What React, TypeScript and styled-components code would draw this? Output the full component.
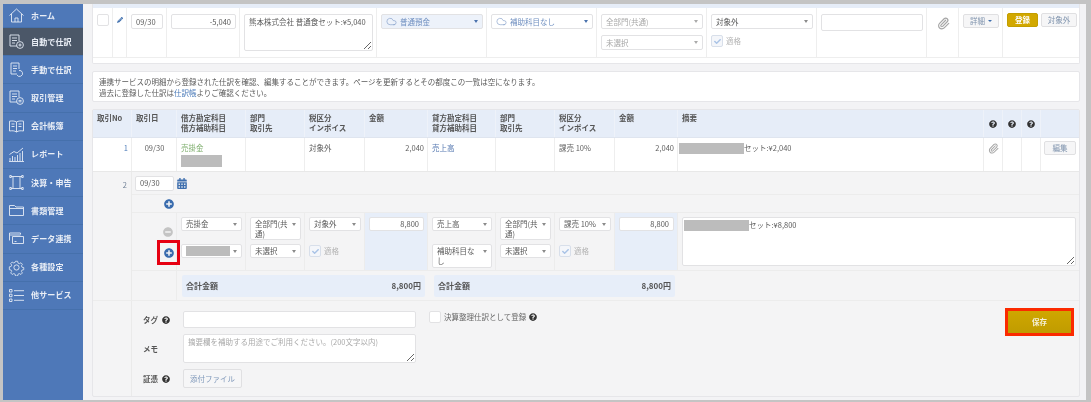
import React from "react";
import styled, { createGlobalStyle, css } from "styled-components";
import { FaCalendarAlt, FaCheck, FaMinusCircle, FaPencilAlt, FaPlusCircle, FaQuestionCircle } from "react-icons/fa";
import { Cloud, Paperclip } from "lucide-react";

const Global = createGlobalStyle`
  html, body { margin: 0; padding: 0; background: #c4c4c4; }
  * { box-sizing: border-box; }
  body { font-family: "Noto Sans CJK JP", "Noto Sans", sans-serif; font-size: 7.5px; line-height: 10px; color: #5a5a5a; }
`;

const Frame = styled.div`
  width: 1091px; height: 402px; padding: 4px 5px 2px 3px; display: flex; overflow: hidden; filter: blur(0.45px);
`;
const Sidebar = styled.nav`
  width: 80px; flex: none; background: #4e78b8; display: flex; flex-direction: column;
`;
const NavItem = styled.div<{ $active?: boolean; $first?: boolean }>`
  height: ${p => (p.$first ? "24px" : "28.2px")}; flex: none; display: flex; align-items: center; gap: 6px; padding-left: 5px;
  color: #e9eef6; font-size: 8px; font-weight: 700; letter-spacing: 0.15px;
  border-bottom: 1px solid #4570ac;
  background: ${p => (p.$active ? "#4b5768" : "transparent")};
  svg { width: 17px; height: 17px; flex: none; fill: none; stroke: #e4ebf5; stroke-width: 0.9; }
`;
const Main = styled.main`
  flex: 1; background: #f3f3f5; padding: 0 6px 3px 9px; display: flex; flex-direction: column; gap: 7px; min-width: 0;
`;
const Card = styled.section`
  background: #fff; border: 1px solid #e6e6e9; border-top: 0; border-radius: 0 0 2px 2px; width: 988px;
`;
const Strip = styled.div`height: 4px; background: #e6edf8;`;
const TopRow = styled.div`
  height: 50px; display: grid; border-bottom: 1px solid #eee; margin-bottom: 5px;
  grid-template-columns: 20px 14px 40px 73px 137px 110px 110px 110px 110px 110px 32px 44px 78px;
`;
const TopCell = styled.div<{ $center?: boolean }>`
  padding: 6px 3px 0 4px; border-right: 1px solid #eee; display: flex; flex-direction: column; gap: 6px;
  ${p => p.$center && css`align-items: center;`}
  &:last-child { border-right: 0; }
`;
const fieldBase = css`
  background: #fff; border: 1px solid #e2e2e4; border-radius: 2px; font: inherit; color: #5a5a5a;
`;
const Field = styled.div<{ $h?: number; $right?: boolean; $w?: number }>`
  ${fieldBase}
  height: ${p => p.$h ?? 15}px; padding: 1px 4px; display: flex; align-items: center; flex: none;
  justify-content: ${p => (p.$right ? "flex-end" : "flex-start")};
  ${p => p.$w && css`width: ${p.$w}px;`}
`;
const TextBox = styled.div<{ $h: number }>`
  ${fieldBase}
  height: ${p => p.$h}px; padding: 2px 4px; resize: vertical; overflow: hidden; flex: none;
`;
const Select = styled.div<{ $h?: number; $tone?: "blue" | "plain" | "mute" }>`
  ${fieldBase}
  min-height: ${p => p.$h ?? 14}px; height: ${p => p.$h ?? 14}px; padding: 1px 11px 1px 4px; position: relative; display: flex; align-items: ${p => ((p.$h ?? 14) > 15 ? "flex-start" : "center")};
  flex: none; gap: 3px;
  ${p => p.$tone === "blue" && css`background: #edf2fa; color: #6f8fc0; height: 15px;`}
  ${p => p.$tone === "plain" && css`color: #6f8fc0; height: 15px;`}
  ${p => p.$tone === "mute" && css`color: #a8a8a8; height: 15px;`}
  &::after {
    content: ""; position: absolute; right: 4px; top: 5px; border: 2.5px solid transparent; border-bottom-width: 0; border-top: 3px solid ${p => (p.$tone === "mute" ? "#aaa" : p.$tone ? "#4a72ad" : "#8a8a8a")};
  }
`;
const CloudIcon = styled(Cloud)`width: 11px; height: 11px; color: #6f8fc0; stroke-width: 1.2; flex: none;`;
const Check = styled.span<{ $on?: boolean }>`
  width: 12px; height: 12px; flex: none; display: inline-flex; align-items: center; justify-content: center;
  background: ${p => (p.$on ? "#f4f6fa" : "#fff")}; border: 1px solid ${p => (p.$on ? "#d8dfea" : "#e2e2e4")}; border-radius: 2px; color: #a9c3e6;
  svg { width: 7px; height: 7px; }
`;
const CheckLine = styled.label`
  display: flex; align-items: center; gap: 3px; color: #b4b4b4;
`;
const Pencil = styled(FaPencilAlt)`width: 6px; height: 6px; color: #3f6fae; margin-top: 3px;`;
const Clip = styled(Paperclip)<{ $size?: number }>`
  width: ${p => p.$size ?? 13}px; height: ${p => p.$size ?? 13}px; color: #a6a6a6; stroke-width: 2.2;
`;
const Btn = styled.button<{ $gold?: boolean; $w?: number }>`
  font: inherit; height: 14px; width: ${p => p.$w ?? 36}px; padding: 0; border-radius: 2px; display: inline-flex; align-items: center; justify-content: center; gap: 3px; flex: none;
  border: 1px solid ${p => (p.$gold ? "#c39e00" : "#e0e0e2")};
  background: ${p => (p.$gold ? "#d2a800" : "#f6f6f7")};
  color: ${p => (p.$gold ? "#fff" : "#7f93ad")};
  font-weight: ${p => (p.$gold ? 700 : 400)};
`;
const Caret = styled.span`border: 2px solid transparent; border-bottom-width: 0; border-top: 2.5px solid #3f6fae;`;
const BtnRow = styled.div`display: flex; gap: 3px; margin-top: -1px;`;
const Notice = styled.section`
  width: 988px; height: 31px; background: #fff; border: 1px solid #e6e6e9; border-radius: 2px; padding: 4px 6px; flex: none; line-height: 11px;
`;
const Link = styled.span`color: #4a7ab8;`;
const Table = styled.section`
  width: 988px; flex: 1; border: 1px solid #e6e6e9; border-radius: 2px; background: #f4f4f5; display: flex; flex-direction: column; overflow: hidden; margin-left: 0;
`;
const columns = "39px 45px 69px 59px 60px 63px 68px 59px 60px 63px 306px 19px 19px 19px 38px";
const HeadRow = styled.div`
  height: 28px; display: grid; grid-template-columns: ${columns}; background: #e6edf8; border-bottom: 1px solid #dfe5ef; flex: none;
`;
const HeadCell = styled.div<{ $center?: boolean }>`
  padding: 3px 3px 0 4px; font-weight: 700; color: #555; border-right: 1px solid #eef2f9; white-space: pre-line;
  ${p => p.$center && css`padding: 10px 0 0; display: flex; justify-content: center;`}
  &:last-child { border-right: 0; }
`;
const Help = styled(FaQuestionCircle)`width: 8px; height: 8px; color: #333; flex: none;`;
const BodyRow = styled.div`
  height: 34px; display: grid; grid-template-columns: ${columns}; background: #fff; border-bottom: 1px solid #e8e8e8; flex: none;
`;
const BodyCell = styled.div<{ $right?: boolean; $center?: boolean; $tone?: string }>`
  padding: 5px 3px 0 4px; border-right: 1px solid #eee; color: ${p => p.$tone ?? "#5f5f5f"};
  text-align: ${p => (p.$right ? "right" : p.$center ? "center" : "left")};
  &:last-child { border-right: 0; }
`;
const Redact = styled.span<{ $w: number; $h?: number }>`
  display: inline-block; width: ${p => p.$w}px; height: ${p => p.$h ?? 11}px; background: #bcbcbc; vertical-align: top;
`;
const RedactBlock = styled(Redact)`display: block; margin-top: 2px;`;
const Clipped = styled.div`display: flex; justify-content: center;`;
const SmallBtn = styled(Btn)`margin: -3px 0 0 0; height: 14px; width: 32px;`;
const Entry = styled.div`flex: 1; display: flex;`;
const EntryNo = styled.div`
  width: 39px; flex: none; border-right: 1px solid #eaeaea; text-align: right; padding: 8px 4px 0 0; color: #6f7f95;
`;
const EntryBody = styled.div`flex: 1; display: flex; flex-direction: column; min-width: 0;`;
const DateRow = styled.div`
  height: 23px; display: flex; align-items: center; gap: 3px; padding: 0 0 0 3px; border-bottom: 1px solid #ececec; flex: none;
`;
const Calendar = styled(FaCalendarAlt)`width: 10px; height: 11px; color: #3f6fae;`;
const PlusRow = styled.div`
  height: 17px; width: 45px; padding-right: 3px; display: flex; align-items: center; justify-content: flex-end; flex: none;
`;
const PlusIcon = styled(FaPlusCircle)`width: 10px; height: 10px; color: #3a6cae; flex: none;`;
const MinusIcon = styled(FaMinusCircle)`width: 10px; height: 10px; color: #c4c4c4; flex: none;`;
const entryColumns = "45px 69px 59px 60px 63px 68px 59px 60px 63px 1fr";
const Lines = styled.div`
  height: 59px; display: grid; grid-template-columns: ${entryColumns}; border-top: 1px solid #ececec; border-bottom: 1px solid #ececec; flex: none;
`;
const LineCell = styled.div<{ $blue?: boolean }>`
  padding: 4px 3px 0 4px; border-right: 1px solid #ececec; display: flex; flex-direction: column; gap: 0;
  ${p => p.$blue && css`background: #e7eef9;`}
  &:last-child { border-right: 0; }
`;
const LineTools = styled(LineCell)`align-items: flex-end; padding: 14px 3px 0 0;`;
const MinusSlot = styled.div`display: flex; margin-bottom: 3px;`;
const Marker = styled.div`
  width: 23px; height: 25px; margin-right: -7px; border: 3px solid #e60012; display: flex; align-items: center; justify-content: center;
`;
const Gap = styled.div<{ $h: number }>`height: ${p => p.$h}px; flex: none;`;
const TotalRow = styled.div`
  height: 29px; display: grid; grid-template-columns: 45px 252px 250px 1fr; flex: none;
`;
const TotalCell = styled.div`
  margin: 4px 4px 3px 5px; background: #e7eef9; display: flex; justify-content: space-between; align-items: center; padding: 0 4px; font-weight: 700; font-size: 8px; color: #555; border-radius: 2px;
`;
const Empty = styled.div`border-right: 1px solid #ececec;`;
const TotalEmpty = styled.div``;
const Form = styled.div`
  flex: 1; margin-left: -39px; padding: 10px 5px 0 50px; border-top: 1px solid #ececec; display: flex; min-height: 0;
`;
const FormGrid = styled.div`
  display: grid; grid-template-columns: 40px 233px; row-gap: 6px; align-items: center; align-content: start; flex: none;
`;
const FormLabel = styled.div`display: flex; align-items: center; gap: 4px; font-weight: 700; color: #555;`;
const FormCheck = styled.div`display: flex; align-items: center; gap: 3px; margin-left: 13px; height: 12px; color: #666;`;
const Spacer = styled.div`flex: 1;`;
const Placeholder = styled.span`color: #aaa;`;
const AttachBtn = styled(Btn)`height: 19px; width: 59px; color: #7f98ba;`;
const SaveMark = styled.div`
  width: 69px; height: 28px; border: 3px solid #fb2a00; margin-top: -3px; flex: none;
`;
const Save = styled.button`
  width: 100%; height: 100%; border: 0; padding: 0; background: linear-gradient(#cfa700, #c09c00); color: #f5f0d8; font: inherit; font-weight: 700; display: flex; align-items: center; justify-content: center;
`;

const I = {
  home: <svg viewBox="0 0 17 17"><path d="M1.5 8.5 8.5 2l7 6.5M3.5 7v8h10V7M7 15v-4h3v4" /></svg>,
  auto: <svg viewBox="0 0 17 17"><path d="M9 13H2V2h9v6M4 5h5M4 7.5h5M4 10h3" /><circle cx="12" cy="12" r="3.4" /><path d="M12 10.4v3.2M10.4 12h3.2" /></svg>,
  manual: <svg viewBox="0 0 17 17"><path d="M9 13H3V2h8v6M5 5h4M5 7.5h4M5 10h3" /><path d="M11 9.5a3 3 0 1 1-2 4.5" /></svg>,
  deal: <svg viewBox="0 0 17 17"><path d="M9 13H2V2h9v6M4 5h5M4 7.5h5M4 10h3" /><circle cx="12" cy="12" r="3.4" /><path d="M10.5 11.4h3M10.5 12.8h3" /></svg>,
  book: <svg viewBox="0 0 17 17"><path d="M8.5 4 C6.5 2.8 4 2.8 1.5 3.2V13c2.5-.4 5-.4 7 1 2-1.4 4.500-1.400 7-1V3.200C13 2.800 10.500 2.800 8.500 4V14M3.500 6h3M3.500 8.500h3M10.500 6h3M10.500 8.500h3" /></svg>,
  report: <svg viewBox="0 0 17 17"><path d="M1.500 8.500 6 5.500l3 1.500 6-5M2 15v-3M4.500 15v-5M7 15v-4M9.500 15V9M12 15V7M14.500 15V5M1 15.500h15" /></svg>,
  closing: <svg viewBox="0 0 17 17"><path d="M3 2.500h11M3 14.500h11M5 2.500v12M12 2.500v12M1.800 1.500h1.500v2H1.800zM13.700 1.500h1.500v2h-1.500zM1.800 13.500h1.500v2H1.800zM13.700 13.500h1.500v2h-1.500z" /></svg>,
  folder: <svg viewBox="0 0 17 17"><path d="M1.500 13.500V3.500h5l1.500 1.500h7.500v8.500zM1.500 6.500h14" /></svg>,
  data: <svg viewBox="0 0 17 17"><path d="M1.500 10.500V3h11v1.500M1.500 5h11" /><path d="M4.500 6.500h11v7h-11zM6.500 11.500h2" /></svg>,
  gear: <svg viewBox="0 0 17 17"><circle cx="8.500" cy="8.500" r="2.600" /><path d="M7.300 1.500h2.400l.4 2 1.500.7 1.800-1 1.600 1.700-1.100 1.700.6 1.500 2 .4v2.400l-2 .4-.6 1.500 1.100 1.700-1.600 1.700-1.800-1-1.500.7-.4 2H7.300l-.4-2-1.500-.7-1.800 1-1.600-1.700 1.100-1.700-.6-1.500-2-.4V7.700l2-.4.6-1.500-1.100-1.700 1.600-1.700 1.800 1 1.500-.7z" transform="translate(.9 .9) scale(.9)" /></svg>,
  list: <svg viewBox="0 0 17 17"><path d="M1.500 2.500h2.500v2.500H1.500zM1.500 7.200h2.500v2.500H1.500zM1.500 12h2.500v2.500H1.500zM6 3.700h10M6 8.500h10M6 13.300h10" /></svg>,
};

const nav: [keyof typeof I, string][] = [
  ["home", "ホーム"], ["auto", "自動で仕訳"], ["manual", "手動で仕訳"], ["deal", "取引管理"], ["book", "会計帳簿"], ["report", "レポート"],
  ["closing", "決算・申告"], ["folder", "書類管理"], ["data", "データ連携"], ["gear", "各種設定"], ["list", "他サービス"],
];
const heads = ["取引No", "取引日", "借方勘定科目\n借方補助科目", "部門\n取引先", "税区分\nインボイス", "金額", "貸方勘定科目\n貸方補助科目", "部門\n取引先", "税区分\nインボイス", "金額", "摘要"];

function Eligible() {
  return <CheckLine><Check $on><FaCheck /></Check>適格</CheckLine>;
}

export default function App() {
  return (
    <Frame>
      <Global />
      <Sidebar>
        {nav.map(([k, t], i) => (
          <NavItem key={k} $first={i === 0} $active={i === 1}>{I[k]}{t}</NavItem>
        ))}
      </Sidebar>
      <Main>
        <Card>
          <Strip />
          <TopRow>
            <TopCell><Check /></TopCell>
            <TopCell $center><Pencil /></TopCell>
            <TopCell><Field>09/30</Field></TopCell>
            <TopCell><Field $right>-5,040</Field></TopCell>
            <TopCell><TextBox $h={37}>熊本株式会社 普通食セット:¥5,040</TextBox></TopCell>
            <TopCell><Select $tone="blue"><CloudIcon />普通預金</Select></TopCell>
            <TopCell><Select $tone="plain"><CloudIcon />補助科目なし</Select></TopCell>
            <TopCell><Select $tone="mute">全部門(共通)</Select><Select $tone="mute">未選択</Select></TopCell>
            <TopCell><Select $h={15}>対象外</Select><Eligible /></TopCell>
            <TopCell><Field $h={17} /></TopCell>
            <TopCell $center><Clip style={{ marginTop: 3 }} /></TopCell>
            <TopCell $center><Btn><span>詳細</span><Caret /></Btn></TopCell>
            <TopCell><BtnRow><Btn $gold $w={31}>登録</Btn><Btn $w={36}>対象外</Btn></BtnRow></TopCell>
          </TopRow>
        </Card>
        <Notice>
          連携サービスの明細から登録された仕訳を確認、編集することができます。ページを更新するとその都度この一覧は空になります。<br />
          過去に登録した仕訳は<Link>仕訳帳</Link>よりご確認ください。
        </Notice>
        <Table>
          <HeadRow>
            {heads.map((h, i) => <HeadCell key={i}>{h}</HeadCell>)}
            <HeadCell $center><Help /></HeadCell>
            <HeadCell $center><Help /></HeadCell>
            <HeadCell $center><Help /></HeadCell>
            <HeadCell />
          </HeadRow>
          <BodyRow>
            <BodyCell $right $tone="#4a7ab8">1</BodyCell>
            <BodyCell $center>09/30</BodyCell>
            <BodyCell $tone="#7fae6e">売掛金<RedactBlock $w={41} $h={12} /></BodyCell>
            <BodyCell />
            <BodyCell>対象外</BodyCell>
            <BodyCell $right>2,040</BodyCell>
            <BodyCell $tone="#5578b0">売上高</BodyCell>
            <BodyCell />
            <BodyCell>課売 10%</BodyCell>
            <BodyCell $right>2,040</BodyCell>
            <BodyCell style={{ paddingLeft: 1 }}><Redact $w={65} />セット:¥2,040</BodyCell>
            <BodyCell><Clipped><Clip $size={11} /></Clipped></BodyCell>
            <BodyCell />
            <BodyCell />
            <BodyCell style={{ paddingLeft: 3 }}><SmallBtn>編集</SmallBtn></BodyCell>
          </BodyRow>
          <Entry>
            <EntryNo>2</EntryNo>
            <EntryBody>
              <DateRow><Field $w={39} $h={15}>09/30</Field><Calendar /></DateRow>
              <PlusRow><PlusIcon /></PlusRow>
              <Lines>
                <LineTools><MinusSlot><MinusIcon /></MinusSlot><Marker><PlusIcon /></Marker></LineTools>
                <LineCell>
                  <Select>売掛金</Select><Gap $h={13} />
                  <Select><Redact $w={45} $h={10} /></Select>
                </LineCell>
                <LineCell>
                  <Select $h={23}>全部門(共通)</Select><Gap $h={4} />
                  <Select>未選択</Select>
                </LineCell>
                <LineCell>
                  <Select>対象外</Select><Gap $h={14} />
                  <Eligible />
                </LineCell>
                <LineCell $blue><Field $right $h={14}>8,800</Field></LineCell>
                <LineCell>
                  <Select>売上高</Select><Gap $h={13} />
                  <Select $h={24}>補助科目なし</Select>
                </LineCell>
                <LineCell>
                  <Select $h={23}>全部門(共通)</Select><Gap $h={4} />
                  <Select>未選択</Select>
                </LineCell>
                <LineCell>
                  <Select>課売 10%</Select><Gap $h={14} />
                  <Eligible />
                </LineCell>
                <LineCell $blue><Field $right $h={14}>8,800</Field></LineCell>
                <LineCell><TextBox $h={49} style={{ padding: "2px 1px" }}><Redact $w={65} />セット:¥8,800</TextBox></LineCell>
              </Lines>
              <TotalRow>
                <Empty />
                <TotalCell><span>合計金額</span><span>8,800円</span></TotalCell>
                <TotalCell><span>合計金額</span><span>8,800円</span></TotalCell>
                <TotalEmpty />
              </TotalRow>
              <Form>
                <FormGrid>
                  <FormLabel>タグ <Help /></FormLabel>
                  <Field $h={17} />
                  <FormLabel>メモ</FormLabel>
                  <TextBox $h={29}><Placeholder>摘要欄を補助する用途でご利用ください。(200文字以内)</Placeholder></TextBox>
                  <FormLabel>証憑 <Help /></FormLabel>
                  <AttachBtn>添付ファイル</AttachBtn>
                </FormGrid>
                <FormCheck><Check />決算整理仕訳として登録 <Help /></FormCheck>
                <Spacer />
                <SaveMark><Save>保存</Save></SaveMark>
              </Form>
            </EntryBody>
          </Entry>
        </Table>
      </Main>
    </Frame>
  );
}
